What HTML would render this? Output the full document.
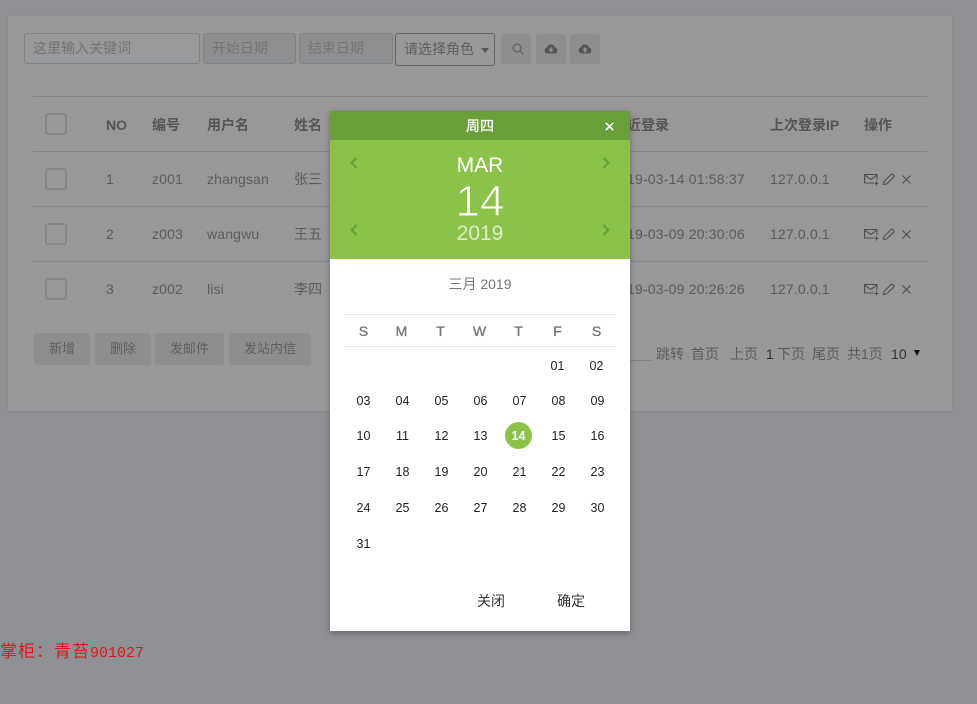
<!DOCTYPE html>
<html lang="zh"><head><meta charset="utf-8"><title>日期选择</title>
<style>
*{box-sizing:border-box}
html,body{margin:0;padding:0}
body{width:977px;height:704px;position:relative;overflow:hidden;background:#8f9194;font-family:"Liberation Sans","Noto Sans CJK SC",sans-serif;font-size:14px;color:#5c5c5c}
.a{position:absolute}
.t{position:absolute;line-height:20px;white-space:nowrap;letter-spacing:.15px}
.dt{letter-spacing:.2px}
.b{font-weight:bold;color:#555;letter-spacing:0}
.card{left:8px;top:16px;width:944px;height:395px;background:#989898;box-shadow:0 1px 2px rgba(0,0,0,.08)}
.inp{height:31px;border:1px solid #7f8285;border-radius:3px;color:#757575;line-height:29px;padding-left:8px;letter-spacing:0}
.line{left:33px;width:894px;height:1px;background:#858585}
.cb{left:45px;width:22px;height:22px;border:2px solid #868686;border-radius:3px;background:#989898}
.btn{background:#8e8e8e;border-radius:3px;color:#5f5f5f;text-align:center;letter-spacing:0;font-size:13px}
.ib{top:34px;width:30px;height:30px;background:#8e8e8e;border-radius:3px}
.pop{left:330px;top:111px;width:300px;height:520px;background:#fff;box-shadow:0 2px 6px rgba(0,0,0,.3)}
.d{position:absolute;width:39px;text-align:center;line-height:20px;font-size:12.5px;color:#222}
.w{position:absolute;width:39px;text-align:center;line-height:20px;font-size:14px;color:#777;-webkit-text-stroke:.35px #777}
svg{position:absolute;overflow:visible}
</style></head><body>
<div class="a card"></div>

<div class="a inp" style="left:24px;top:33px;width:176px;background:#97999b">这里输入关键词</div>
<div class="a inp" style="left:203px;top:33px;width:93px;background:#8e8f91">开始日期</div>
<div class="a inp" style="left:299px;top:33px;width:94px;background:#8e8f91">结束日期</div>
<div class="a" style="left:395px;top:33px;width:100px;height:33px;border:1px solid #666;border-radius:3px;color:#5f5f5f;line-height:31px;padding-left:8px">请选择角色</div>
<div class="a" style="left:481px;top:48px;border:4.5px solid transparent;border-top:5px solid #555;border-bottom:0"></div>
<div class="a ib" style="left:501px"><svg style="left:11px;top:9px" width="13" height="13" viewBox="0 0 13 13" fill="none" stroke="#5c5c5c" stroke-width="1.1"><circle cx="5" cy="5" r="4"/><path d="M8 8L11.500 11.500"/></svg></div>
<div class="a ib" style="left:536px"><svg style="left:8px;top:10px" width="14" height="10" viewBox="0 0 14 10"><path fill="#555" d="M3.200 9.500A3 3 0 0 1 2.900 3.600 4.200 4.200 0 0 1 11 3.600 3 3 0 0 1 10.800 9.500Z"/><path fill="#8e8e8e" d="M5.800 3.500h2.400v2.300h1.500L7 8.500 4.300 5.800h1.500Z"/></svg></div>
<div class="a ib" style="left:570px"><svg style="left:8px;top:10px" width="14" height="10" viewBox="0 0 14 10"><path fill="#555" d="M3.200 9.500A3 3 0 0 1 2.900 3.600 4.200 4.200 0 0 1 11 3.600 3 3 0 0 1 10.800 9.500Z"/><path fill="#8e8e8e" d="M7 3l2.700 2.700H8.200v2.500H5.800V5.700H4.300Z"/></svg></div>

<div class="a line" style="top:96px"></div>
<div class="a line" style="top:151px"></div>
<div class="a line" style="top:206px"></div>
<div class="a line" style="top:261px"></div>

<div class="a cb" style="top:113px"></div>
<div class="a cb" style="top:168px"></div>
<div class="a cb" style="top:223px"></div>
<div class="a cb" style="top:278px"></div>

<div class="t b" style="left:106px;top:115px">NO</div>
<div class="t b" style="left:152px;top:115px">编号</div>
<div class="t b" style="left:207px;top:115px">用户名</div>
<div class="t b" style="left:294px;top:115px">姓名</div>
<div class="t b" style="left:613px;top:115px">最近登录</div>
<div class="t b" style="left:770px;top:115px">上次登录IP</div>
<div class="t b" style="left:864px;top:115px">操作</div>

<div class="t" style="left:106px;top:169px">1</div>
<div class="t" style="left:152px;top:169px">z001</div>
<div class="t" style="left:207px;top:169px">zhangsan</div>
<div class="t" style="left:294px;top:169px">张三</div>
<div class="t dt" style="left:611px;top:169px">2019-03-14 01:58:37</div>
<div class="t" style="left:770px;top:169px">127.0.0.1</div>

<div class="t" style="left:106px;top:224px">2</div>
<div class="t" style="left:152px;top:224px">z003</div>
<div class="t" style="left:207px;top:224px">wangwu</div>
<div class="t" style="left:294px;top:224px">王五</div>
<div class="t dt" style="left:611px;top:224px">2019-03-09 20:30:06</div>
<div class="t" style="left:770px;top:224px">127.0.0.1</div>

<div class="t" style="left:106px;top:279px">3</div>
<div class="t" style="left:152px;top:279px">z002</div>
<div class="t" style="left:207px;top:279px">lisi</div>
<div class="t" style="left:294px;top:279px">李四</div>
<div class="t dt" style="left:611px;top:279px">2019-03-09 20:26:26</div>
<div class="t" style="left:770px;top:279px">127.0.0.1</div>

<svg style="left:864px;top:173px" width="50" height="14" viewBox="0 0 50 14" fill="none" stroke="#4f4f4f" stroke-width="1.1"><path d="M10 10H.6V1.500H13V7M.6 2L6.800 6.500 13 2M12.500 8v4.500M10.500 10.500h4"/><path d="M19.500 11.500l.5-3L27 1.600c.8-.7 1.200-.7 2 0l.6.6c.7.8.7 1.200 0 2L22.500 11Z"/><path d="M38.500 2.500l8 8M46.500 2.500l-8 8"/></svg>
<svg style="left:864px;top:228px" width="50" height="14" viewBox="0 0 50 14" fill="none" stroke="#4f4f4f" stroke-width="1.1"><path d="M10 10H.6V1.500H13V7M.6 2L6.800 6.500 13 2M12.500 8v4.500M10.500 10.500h4"/><path d="M19.500 11.500l.5-3L27 1.600c.8-.7 1.200-.7 2 0l.6.6c.7.8.7 1.200 0 2L22.500 11Z"/><path d="M38.500 2.500l8 8M46.500 2.500l-8 8"/></svg>
<svg style="left:864px;top:283px" width="50" height="14" viewBox="0 0 50 14" fill="none" stroke="#4f4f4f" stroke-width="1.1"><path d="M10 10H.6V1.500H13V7M.6 2L6.800 6.500 13 2M12.500 8v4.500M10.500 10.500h4"/><path d="M19.500 11.500l.5-3L27 1.600c.8-.7 1.200-.7 2 0l.6.6c.7.8.7 1.200 0 2L22.500 11Z"/><path d="M38.500 2.500l8 8M46.500 2.500l-8 8"/></svg>

<div class="a btn" style="left:34px;top:333px;width:56px;height:32px;line-height:32px">新增</div>
<div class="a btn" style="left:95px;top:333px;width:56px;height:32px;line-height:32px">删除</div>
<div class="a btn" style="left:155px;top:333px;width:69px;height:32px;line-height:32px">发邮件</div>
<div class="a btn" style="left:229px;top:333px;width:82px;height:32px;line-height:32px">发站内信</div>

<div class="a" style="left:630px;top:360px;width:22px;height:1px;background:#808080"></div>
<div class="t" style="left:656px;top:344px;letter-spacing:0">跳转</div>
<div class="t" style="left:691px;top:344px;letter-spacing:0">首页</div>
<div class="t" style="left:730px;top:344px;letter-spacing:0">上页</div>
<div class="t" style="left:766px;top:344px;color:#2e2e2e">1</div>
<div class="t" style="left:777px;top:344px;letter-spacing:0">下页</div>
<div class="t" style="left:812px;top:344px;letter-spacing:0">尾页</div>
<div class="t" style="left:847px;top:344px;letter-spacing:0">共1页</div>
<div class="t" style="left:891px;top:344px;color:#333">10</div>
<div class="a" style="left:914px;top:350px;border:3.500px solid transparent;border-top:6px solid #111;border-bottom:0"></div>

<div class="t" style="left:0;top:640px;color:#e0181c;font-family:'Noto Sans CJK SC',sans-serif;font-size:17px;letter-spacing:1px">掌柜：青苔<span style="font-family:'Liberation Mono',monospace;font-size:15px;letter-spacing:0">901027</span></div>

<div class="a pop">
  <div class="a" style="left:0;top:0;width:300px;height:29px;background:#689f38"></div>
  <div class="a" style="left:0;top:29px;width:300px;height:119px;background:#8bc34a"></div>
  <div class="t" style="left:0;width:300px;top:5px;text-align:center;color:#fff;letter-spacing:0;-webkit-text-stroke:.3px #fff">周四</div>
  <svg style="left:275px;top:11px" width="9" height="9" viewBox="0 0 9 9" stroke="#fff" stroke-width="1.600"><path d="M.8.8l7.400 7.400M8.200.8L.8 8.200"/></svg>
  <svg style="left:20px;top:46px" width="8" height="12" viewBox="0 0 8 12" fill="none" stroke="#689f38" stroke-width="2.200"><path d="M6.500 1L1.800 6l4.700 5"/></svg>
  <svg style="left:272px;top:46px" width="8" height="12" viewBox="0 0 8 12" fill="none" stroke="#689f38" stroke-width="2.200"><path d="M1.500 1l4.700 5-4.700 5"/></svg>
  <svg style="left:20px;top:113px" width="8" height="12" viewBox="0 0 8 12" fill="none" stroke="#689f38" stroke-width="2.200"><path d="M6.500 1L1.800 6l4.700 5"/></svg>
  <svg style="left:272px;top:113px" width="8" height="12" viewBox="0 0 8 12" fill="none" stroke="#689f38" stroke-width="2.200"><path d="M1.500 1l4.700 5-4.700 5"/></svg>
  <div class="a" style="left:0;width:300px;top:42px;text-align:center;color:#fff;font-size:21px;line-height:26px">MAR</div>
  <div class="a" style="left:0;width:300px;top:65px;text-align:center;color:#fff;font-size:44px;line-height:52px;-webkit-text-stroke:.9px #8bc34a">14</div>
  <div class="a" style="left:0;width:300px;top:110px;text-align:center;color:#dcedc8;font-size:21px;line-height:26px">2019</div>

  <div class="a" style="left:0;width:300px;top:163px;text-align:center;color:#777;font-size:14px;line-height:20px">三月 2019</div>
  <div class="a" style="left:14px;top:203px;width:272px;height:1px;background:#e6e6e6"></div>
  <div class="a" style="left:14px;top:235px;width:272px;height:1px;background:#e6e6e6"></div>

  <div class="w" style="left:14px;top:210px">S</div><div class="w" style="left:52px;top:210px">M</div><div class="w" style="left:91px;top:210px">T</div><div class="w" style="left:130px;top:210px">W</div><div class="w" style="left:169px;top:210px">T</div><div class="w" style="left:208px;top:210px">F</div><div class="w" style="left:247px;top:210px">S</div>

  <div class="d" style="left:208px;top:245px">01</div><div class="d" style="left:247px;top:245px">02</div>

  <div class="d" style="left:14px;top:280px">03</div><div class="d" style="left:53px;top:280px">04</div><div class="d" style="left:92px;top:280px">05</div><div class="d" style="left:131px;top:280px">06</div><div class="d" style="left:170px;top:280px">07</div><div class="d" style="left:209px;top:280px">08</div><div class="d" style="left:248px;top:280px">09</div>

  <div class="d" style="left:14px;top:315px">10</div><div class="d" style="left:53px;top:315px">11</div><div class="d" style="left:92px;top:315px">12</div><div class="d" style="left:131px;top:315px">13</div>
  <div class="a" style="left:175px;top:311px;width:27px;height:27px;border-radius:50%;background:#8bc34a"></div>
  <div class="d" style="left:169px;top:315px;color:#fff;font-weight:bold">14</div>
  <div class="d" style="left:209px;top:315px">15</div><div class="d" style="left:248px;top:315px">16</div>

  <div class="d" style="left:14px;top:351px">17</div><div class="d" style="left:53px;top:351px">18</div><div class="d" style="left:92px;top:351px">19</div><div class="d" style="left:131px;top:351px">20</div><div class="d" style="left:170px;top:351px">21</div><div class="d" style="left:209px;top:351px">22</div><div class="d" style="left:248px;top:351px">23</div>

  <div class="d" style="left:14px;top:387px">24</div><div class="d" style="left:53px;top:387px">25</div><div class="d" style="left:92px;top:387px">26</div><div class="d" style="left:131px;top:387px">27</div><div class="d" style="left:170px;top:387px">28</div><div class="d" style="left:209px;top:387px">29</div><div class="d" style="left:248px;top:387px">30</div>

  <div class="d" style="left:14px;top:423px">31</div>

  <div class="t" style="left:147px;top:480px;color:#333;font-size:14px;letter-spacing:0">关闭</div>
  <div class="t" style="left:227px;top:480px;color:#333;font-size:14px;letter-spacing:0">确定</div>
</div>
</body></html>
